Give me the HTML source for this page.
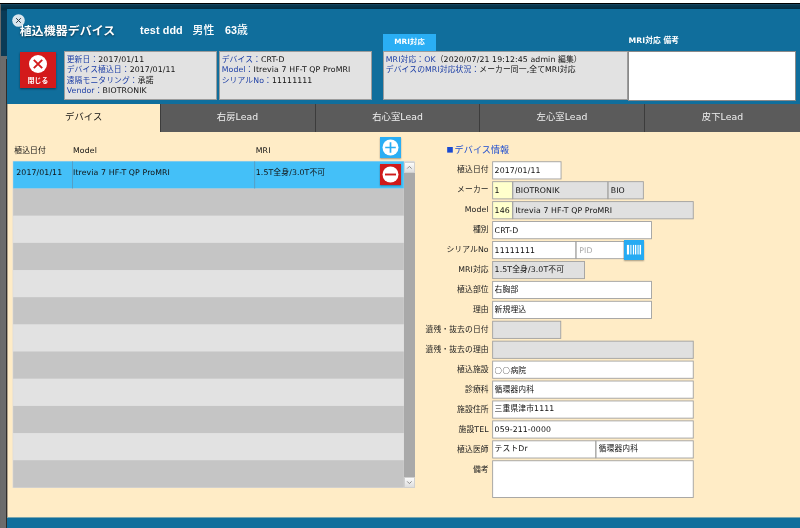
<!DOCTYPE html><html lang="ja"><head><meta charset="utf-8"><title>植込機器デバイス</title><style>
*{box-sizing:border-box;margin:0;padding:0}
html,body{width:800px;height:528px;overflow:hidden;background:#fff}
body{position:relative;font-family:"DejaVu Sans","Liberation Sans","Noto Sans CJK JP",sans-serif;font-size:7.8px;color:#111;line-height:1;letter-spacing:.1px}
.a{position:absolute;white-space:nowrap}
.j{font-family:"Noto Sans CJK JP",sans-serif}
.bl{color:#1d3fa6}
.info{background:#e2e2e2;border:1px solid #9c9c9c;top:51px;height:49px}
.info .t{position:absolute;left:2.2px;top:2.7px;line-height:10.45px;white-space:nowrap}
.tab{top:104px;height:27.7px;background:#5b5b5b;color:#f0f0f0;font-size:9.3px;text-align:center;line-height:26px;border-left:1px solid #3c3c3c}
.lab{right:311.3px;text-align:right;line-height:18.7px;height:18.7px;color:#222}
.f{height:17.3px;border:1px solid #a2a2a2;background:#fff;line-height:17.7px;padding-left:1.4px;overflow:hidden;font-size:7.8px}
.v{height:15.4px;overflow:hidden;font-size:7.8px}
.g{background:#e0e0e0}
.y{background:#ffffcc}
.row{left:13.2px;width:390.6px;height:27.1px}
</style></head><body style="will-change:transform">
<div class="a" style="left:0;top:0;width:800px;height:3px;background:#fff"></div>
<div class="a" style="left:0;top:2px;width:800px;height:526px;background:linear-gradient(#fff 0,#fff .6px,#000 .9px,#000 1.9px,#1a4761 2.3px,#0a3850 3.4px,#06334a 5.5px,#052c41 7px,#0a3b57 9.5px)"></div>
<div class="a" style="left:0;top:55.5px;width:7px;height:473px;background:#6c6c6c"></div>
<div class="a" style="left:6px;top:59px;width:1px;height:469px;background:#302d2b"></div>
<div class="a" style="left:0;top:4px;width:1px;height:524px;background:#6a6a6a"></div>
<div class="a" style="left:7px;top:9px;width:793px;height:519px;background:#106e9c"></div>
<svg class="a" style="left:11px;top:12.8px" width="15" height="15" viewBox="0 0 15 15"><circle cx="7.5" cy="7.5" r="6.3" fill="#d9e6ee"/><path d="M5.2 5.2 L9.8 9.8 M9.8 5.2 L5.2 9.8" stroke="#2b3a44" stroke-width="1" fill="none"/></svg>
<div class="a" style="left:19.8px;top:23.1px;font-size:11.9px;font-weight:bold;color:#fff;line-height:16px;text-shadow:0 1px 2px rgba(0,0,0,.55)">植込機器デバイス</div>
<div class="a" style="left:140px;top:21.8px;font-size:10.8px;color:#fff;line-height:16px;font-weight:500;font-family:'Liberation Sans','Noto Sans CJK JP',sans-serif"><b>test ddd</b><span style="display:inline-block;width:9.8px"></span>男性<span style="display:inline-block;width:10.5px"></span><b>63</b>歳</div>
<div class="a" style="left:19.8px;top:51.6px;width:36.5px;height:36.2px;background:#d31a1b;box-shadow:0 1px 2px rgba(0,0,0,.45)"></div>
<svg class="a" style="left:28.1px;top:54.3px" width="20" height="20" viewBox="0 0 20 20"><circle cx="10" cy="10" r="9" fill="#fff"/><path d="M5.8 5.8 L14.2 14.2 M14.2 5.8 L5.8 14.2" stroke="#d31a1b" stroke-width="1.9" fill="none"/></svg>
<div class="a" style="left:19.8px;top:76.5px;width:36.5px;text-align:center;font-size:6.8px;font-weight:bold;color:#fff;line-height:8px">閉じる</div>
<div class="a info" style="left:63.5px;width:153px"><div class="t"><span class="bl">更新日：</span>2017/01/11<br><span class="bl">デバイス植込日：</span>2017/01/11<br><span class="bl">遠隔モニタリング：</span>承諾<br><span class="bl">Vendor：</span>BIOTRONIK</div></div>
<div class="a info" style="left:218.5px;width:153.5px"><div class="t"><span class="bl">デバイス：</span>CRT-D<br><span class="bl">Model：</span>Itrevia 7 HF-T QP ProMRI<br><span class="bl">シリアルNo：</span>11111111</div></div>
<div class="a" style="left:383px;top:33.8px;width:53px;height:17.2px;background:#2aaef4;color:#fff;font-weight:bold;text-align:center;line-height:16.4px;font-size:7.3px">MRI対応</div>
<div class="a info" style="left:383px;width:245px"><div class="t" style="left:1.8px"><span class="bl">MRI対応：OK</span>（2020/07/21 19:12:45 admin 編集）<br><span class="bl">デバイスのMRI対応状況：</span>メーカー同一,全てMRI対応</div></div>
<div class="a" style="left:628.5px;top:36.4px;color:#fff;font-weight:bold;font-size:7.7px;line-height:9px">MRI対応 備考</div>
<div class="a" style="left:627.5px;top:51px;width:168.7px;height:49.5px;background:#fff;border:1px solid #8a8a8a"></div>
<div class="a" style="left:7px;top:104px;width:793px;height:413px;background:#ffecc6"></div>
<div class="a" style="left:7px;top:104px;width:1px;height:413px;background:rgba(60,55,50,.4)"></div>
<div class="a" style="left:7px;top:517px;width:793px;height:1px;background:rgba(255,236,198,.45)"></div>
<div class="a" style="left:65px;top:104px;width:37px;text-align:center;font-size:9.3px;line-height:26px;color:#111" >デバイス</div>
<div class="a tab" style="left:159.6px;width:155px;">右房Lead</div>
<div class="a tab" style="left:314.6px;width:165px;">右心室Lead</div>
<div class="a tab" style="left:479px;width:165px;">左心室Lead</div>
<div class="a tab" style="left:644px;width:156px;">皮下Lead</div>
<div class="a" style="left:14.3px;top:145.5px;line-height:10px">植込日付</div>
<div class="a" style="left:73px;top:145.5px;line-height:10px">Model</div>
<div class="a" style="left:255.8px;top:145.5px;line-height:10px">MRI</div>
<div class="a" style="left:380px;top:137px;width:21.2px;height:21px;background:#2aaef4;box-shadow:0 1px 1.5px rgba(0,0,0,.35)"></div>
<svg class="a" style="left:382.1px;top:139px" width="17" height="17" viewBox="0 0 17 17"><circle cx="8.5" cy="8.5" r="8" fill="#fff"/><path d="M8.5 3.2 V13.8 M3.2 8.5 H13.8" stroke="#2aaef4" stroke-width="1.7" fill="none"/></svg>
<svg class="a" style="left:0;top:0" width="800" height="528" viewBox="0 0 800 528"><rect x="12.6" y="160.9" width="402" height="327" fill="#d9d9d9"/><rect x="13.2" y="161.40" width="390.6" height="27.19" fill="#44c0f8"/><rect x="13.2" y="188.57" width="390.6" height="27.19" fill="#c5c5c5"/><rect x="13.2" y="215.74" width="390.6" height="27.19" fill="#e2e2e2"/><rect x="13.2" y="242.91" width="390.6" height="27.19" fill="#c5c5c5"/><rect x="13.2" y="270.08" width="390.6" height="27.19" fill="#e2e2e2"/><rect x="13.2" y="297.25" width="390.6" height="27.19" fill="#c5c5c5"/><rect x="13.2" y="324.42" width="390.6" height="27.19" fill="#e2e2e2"/><rect x="13.2" y="351.59" width="390.6" height="27.19" fill="#c5c5c5"/><rect x="13.2" y="378.76" width="390.6" height="27.19" fill="#e2e2e2"/><rect x="13.2" y="405.93" width="390.6" height="27.19" fill="#c5c5c5"/><rect x="13.2" y="433.10" width="390.6" height="27.19" fill="#e2e2e2"/><rect x="13.2" y="460.27" width="390.6" height="27.19" fill="#c5c5c5"/><rect x="72.2" y="161.4" width=".8" height="27.1" fill="#5a97b8"/><rect x="254.3" y="161.4" width=".8" height="27.1" fill="#5a97b8"/></svg>
<div class="a" style="left:16.3px;top:167.7px;line-height:10px">2017/01/11</div>
<div class="a" style="left:73px;top:167.7px;line-height:10px">Itrevia 7 HF-T QP ProMRI</div>
<div class="a" style="left:255.8px;top:167.7px;line-height:10px">1.5T全身/3.0T不可</div>
<div class="a" style="left:380.3px;top:164.2px;width:20.8px;height:20.8px;background:#cf1a1a;box-shadow:0 1px 1.5px rgba(0,0,0,.35)"></div>
<svg class="a" style="left:382.2px;top:166.1px" width="17" height="17" viewBox="0 0 17 17"><circle cx="8.5" cy="8.5" r="8" fill="#fff"/><path d="M3 8.5 H14" stroke="#cf1a1a" stroke-width="1.9" fill="none"/></svg>
<div class="a" style="left:403.8px;top:161.5px;width:10.8px;height:326px;background:#a9a9a9"></div>
<div class="a" style="left:403.8px;top:161.5px;width:10.8px;height:11px;background:linear-gradient(#fbfbfb,#dedede);border:1px solid #d0d0d0"></div>
<svg class="a" style="left:403.8px;top:161.5px" width="10.8" height="11" viewBox="0 0 10.8 11"><path d="M3.2 6.6 L5.4 4.4 L7.6 6.6" stroke="#8a8a8a" stroke-width="1" fill="none"/></svg>
<div class="a" style="left:403.8px;top:476.5px;width:10.8px;height:11px;background:linear-gradient(#fbfbfb,#dedede);border:1px solid #d0d0d0"></div>
<svg class="a" style="left:403.8px;top:476.5px" width="10.8" height="11" viewBox="0 0 10.8 11"><path d="M3.2 4.4 L5.4 6.6 L7.6 4.4" stroke="#8a8a8a" stroke-width="1" fill="none"/></svg>
<div class="a" style="left:445.6px;top:144px;font-size:9.05px;line-height:12px;color:#1a4ad0"><span class="j" style="font-size:7px;display:inline-block;width:9px;text-align:center;position:relative;top:-.9px">■</span>デバイス情報</div>
<div class="a lab" style="top:161.4px">植込日付</div>
<div class="a lab" style="top:181.35px">メーカー</div>
<div class="a lab" style="top:201.3px">Model</div>
<div class="a lab" style="top:221.25px">種別</div>
<div class="a lab" style="top:241.2px">シリアルNo</div>
<div class="a lab" style="top:261.15px">MRI対応</div>
<div class="a lab" style="top:281.1px">植込部位</div>
<div class="a lab" style="top:301.05px">理由</div>
<div class="a lab" style="top:321px">遺残・抜去の日付</div>
<div class="a lab" style="top:340.95px">遺残・抜去の理由</div>
<div class="a lab" style="top:360.9px">植込施設</div>
<div class="a lab" style="top:380.85px">診療科</div>
<div class="a lab" style="top:400.8px">施設住所</div>
<div class="a lab" style="top:420.75px">施設TEL</div>
<div class="a lab" style="top:440.7px">植込医師</div>
<div class="a lab" style="top:460.65px">備考</div>
<svg class="a" style="left:0;top:0" width="800" height="528" viewBox="0 0 800 528"><g stroke="#a0a0a0" stroke-width=".9"><rect x="492.65" y="161.75" width="68.40" height="17.20" fill="#fff"/><rect x="492.65" y="181.68" width="19.90" height="17.20" fill="#ffffcc"/><rect x="512.85" y="181.68" width="95.00" height="17.20" fill="#e0e0e0"/><rect x="608.15" y="181.68" width="35.20" height="17.20" fill="#e0e0e0"/><rect x="492.65" y="201.62" width="19.90" height="17.20" fill="#ffffcc"/><rect x="512.85" y="201.62" width="180.40" height="17.20" fill="#e0e0e0"/><rect x="492.65" y="221.55" width="158.90" height="17.20" fill="#fff"/><rect x="492.65" y="241.48" width="83.20" height="17.20" fill="#fff"/><rect x="576.15" y="241.48" width="48.00" height="17.20" fill="#fff"/><rect x="492.65" y="261.42" width="91.90" height="17.20" fill="#e0e0e0"/><rect x="492.65" y="281.35" width="158.90" height="17.20" fill="#fff"/><rect x="492.65" y="301.28" width="158.90" height="17.20" fill="#fff"/><rect x="492.65" y="321.21" width="68.10" height="17.20" fill="#e0e0e0"/><rect x="492.65" y="341.15" width="200.60" height="17.20" fill="#e0e0e0"/><rect x="492.65" y="361.08" width="200.60" height="17.20" fill="#fff"/><rect x="492.65" y="381.01" width="200.60" height="17.20" fill="#fff"/><rect x="492.65" y="400.95" width="200.60" height="17.20" fill="#fff"/><rect x="492.65" y="420.88" width="200.60" height="17.20" fill="#fff"/><rect x="492.65" y="440.81" width="103.10" height="17.20" fill="#fff"/><rect x="596.05" y="440.81" width="97.20" height="17.20" fill="#fff"/><rect x="492.65" y="460.75" width="200.60" height="36.70" fill="#fff"/></g></svg>
<div class="a v" style="left:494.6px;top:162.3px;width:65.9px;line-height:17.5px">2017/01/11</div>
<div class="a v" style="left:494.6px;top:182.233px;width:17.4px;line-height:17.5px">1</div>
<div class="a v" style="left:515.4px;top:182.233px;width:91.9px;line-height:17.5px">BIOTRONIK</div>
<div class="a v" style="left:610.7px;top:182.233px;width:32.1px;line-height:17.5px">BIO</div>
<div class="a v" style="left:494.6px;top:202.166px;width:17.4px;line-height:17.5px">146</div>
<div class="a v" style="left:515.4px;top:202.166px;width:177.3px;line-height:17.5px">Itrevia 7 HF-T QP ProMRI</div>
<div class="a v" style="left:494.6px;top:222.099px;width:156.4px;line-height:17.5px">CRT-D</div>
<div class="a v" style="left:494.6px;top:242.032px;width:80.7px;line-height:17.5px">11111111</div>
<div class="a v" style="left:579.3px;top:242.032px;width:44.3px;line-height:17.5px"><span style="color:#a9a9a9">PID</span></div>
<div class="a v" style="left:494.6px;top:261.965px;width:89.4px;line-height:16.2px">1.5T全身/3.0T不可</div>
<div class="a v" style="left:494.6px;top:281.898px;width:156.4px;line-height:16.2px">右胸部</div>
<div class="a v" style="left:494.6px;top:301.831px;width:156.4px;line-height:16.2px">新規埋込</div>
<div class="a v" style="left:494.6px;top:361.63px;width:198.1px;line-height:16.2px"><span class="j" style="font-weight:500;font-size:7.4px;letter-spacing:.5px">○○</span>病院</div>
<div class="a v" style="left:494.6px;top:381.563px;width:198.1px;line-height:16.2px">循環器内科</div>
<div class="a v" style="left:494.6px;top:401.496px;width:198.1px;line-height:16.2px">三重県津市1111</div>
<div class="a v" style="left:494.6px;top:421.429px;width:198.1px;line-height:17.5px">059-211-0000</div>
<div class="a v" style="left:494.6px;top:441.362px;width:100.6px;line-height:16.2px">テストDr</div>
<div class="a v" style="left:598.6px;top:441.362px;width:94.1px;line-height:16.2px">循環器内科</div>
<div class="a" style="left:624px;top:240.1px;width:20px;height:19.5px;background:#25abf3;box-shadow:0 1px 1.5px rgba(0,0,0,.35)"></div>
<svg class="a" style="left:624px;top:240.1px" width="20" height="19.5" viewBox="0 0 20 19.5"><g fill="#fff"><rect x="2.9" y="4.9" width="2.1" height="9.6"/><rect x="5.8" y="4.9" width="1.9" height="9.6" opacity=".6"/><rect x="8.9" y="4.9" width="1.1" height="9.6"/><rect x="10.9" y="4.9" width="1.4" height="9.6"/><rect x="13.2" y="4.9" width="2.2" height="9.6" opacity=".6"/><rect x="15.8" y="4.9" width="1.25" height="9.6"/></g></svg>
</body></html>
